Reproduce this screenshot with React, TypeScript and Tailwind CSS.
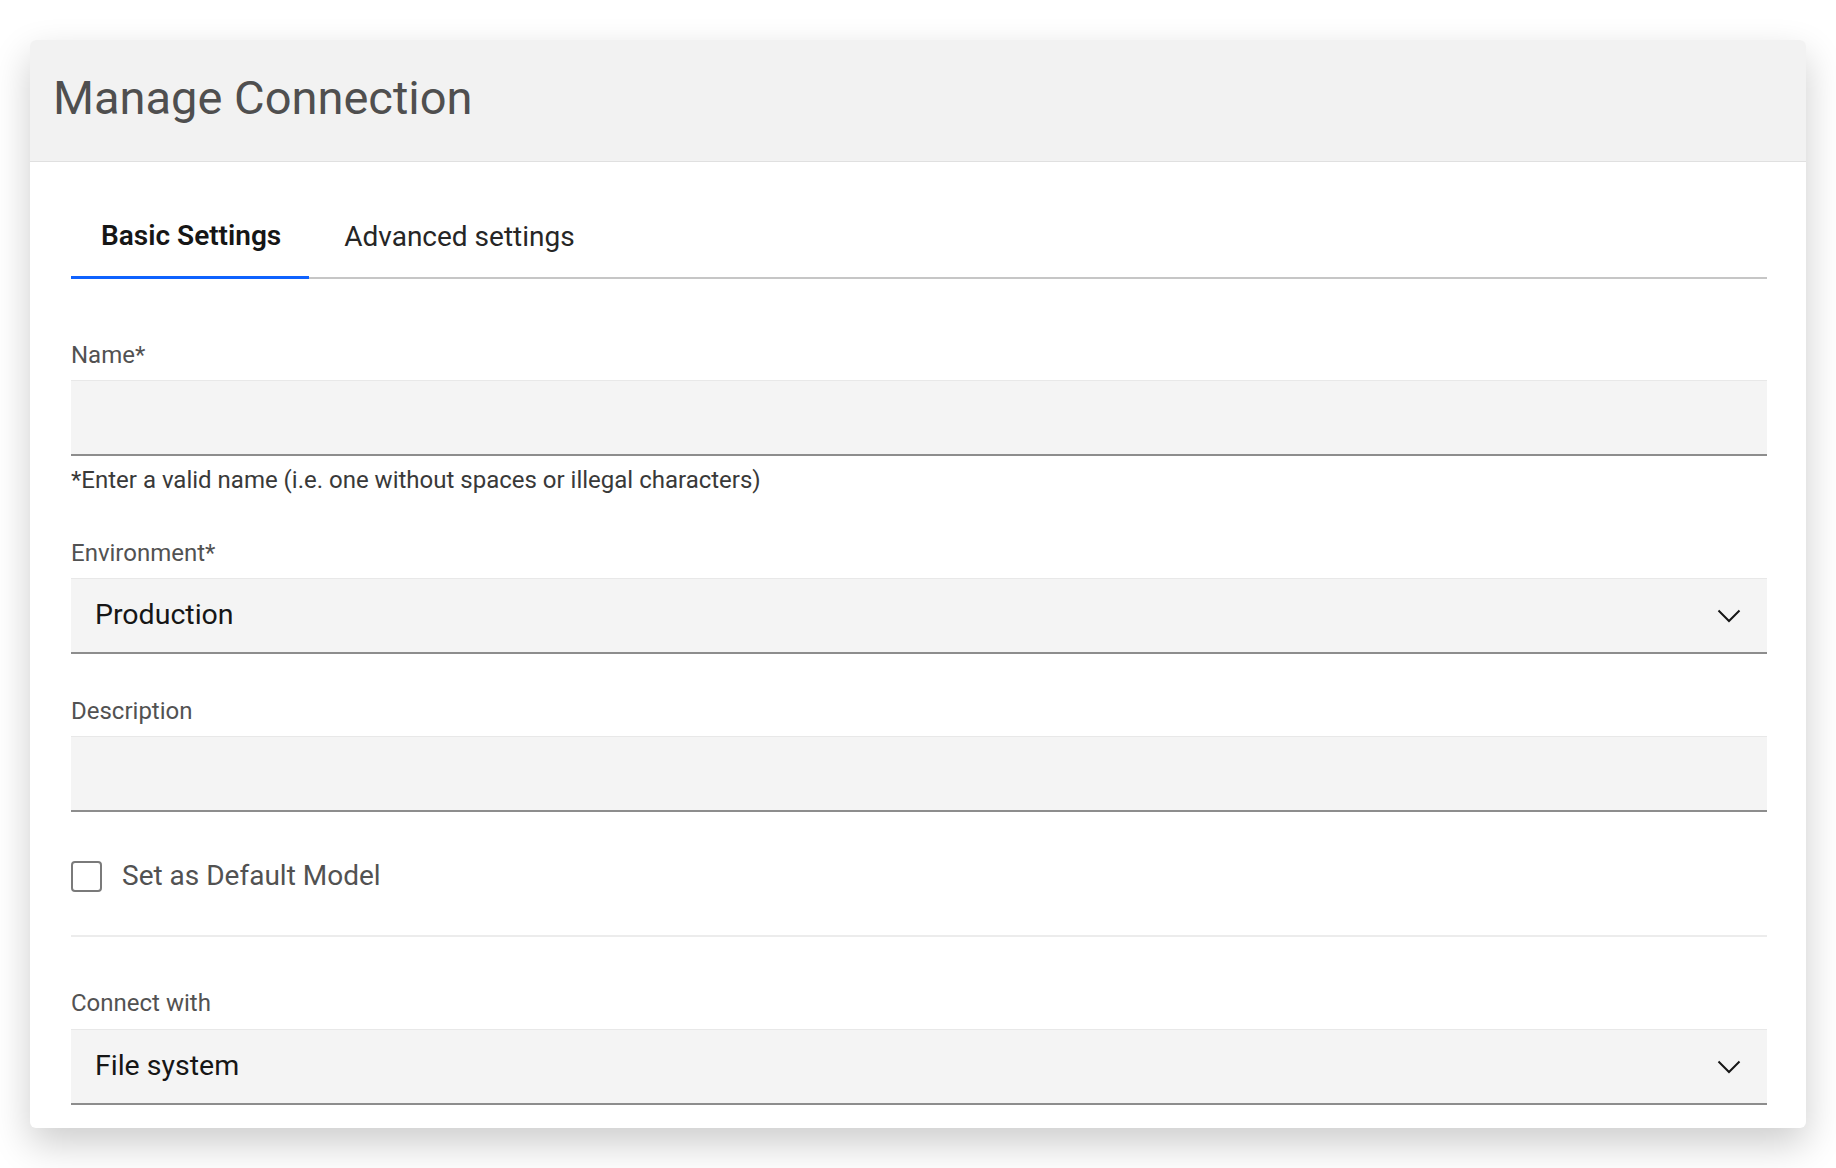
import React, { useState } from "react";

const font = { fontFamily: "Roboto, 'Noto Sans', sans-serif" };

function Chevron() {
  return (
    <svg width="24" height="14" viewBox="0 0 24 14" fill="none">
      <path d="M1.5 1.5 L12 12 L22.5 1.5" stroke="#161616" strokeWidth="2" />
    </svg>
  );
}

function FieldLabel({ children, className = "" }: { children: React.ReactNode; className?: string }) {
  return <div className={`text-[24px] leading-[28px] text-[#525252] ${className}`}>{children}</div>;
}

function TextBox() {
  return <div className="h-[76px] bg-[#f4f4f4] border-t border-t-[#e8e8e8] border-b-2 border-b-[#8d8d8d]" />;
}

function SelectBox({ value }: { value: string }) {
  return (
    <div className="h-[76px] bg-[#f4f4f4] border-t border-t-[#e8e8e8] border-b-2 border-b-[#8d8d8d] flex items-center justify-between pl-[24px] pr-[26px]">
      <span className="text-[28.5px] text-[#161616]">{value}</span>
      <Chevron />
    </div>
  );
}

export default function App() {
  const [tab, setTab] = useState<"basic" | "advanced">("basic");
  const [isDefault, setIsDefault] = useState(false);

  return (
    <div className="min-h-screen bg-white pt-[40px] px-[30px]" style={font}>
      <div className="rounded-[6px] bg-white shadow-[0_16px_38px_rgba(0,0,0,0.2)] overflow-hidden">
        {/* Header */}
        <div className="h-[122px] bg-[#f2f2f2] border-b border-[#e0e0e0] flex items-center pl-[23px] pb-[6px]">
          <h1 className="text-[47px] font-normal text-[#4f4f4f] leading-none">Manage Connection</h1>
        </div>

        <div className="pl-[41px] pr-[39px] pt-[39px] pb-[23px]">
          {/* Tabs */}
          <div className="flex border-b-2 border-[#c6c6c6]">
            <button
              type="button"
              onClick={() => setTab("basic")}
              className={`h-[78px] -mb-[2px] pl-[30px] pr-[28px] pb-[6px] text-[28px] ${
                tab === "basic"
                  ? "font-semibold text-[#161616] border-b-[3px] border-[#0f62fe]"
                  : "text-[#262626]"
              }`}
            >
              Basic Settings
            </button>
            <button
              type="button"
              onClick={() => setTab("advanced")}
              className={`h-[78px] -mb-[2px] px-[35px] pb-[6px] text-[28px] ${
                tab === "advanced"
                  ? "font-semibold text-[#161616] border-b-[3px] border-[#0f62fe]"
                  : "text-[#262626]"
              }`}
            >
              Advanced settings
            </button>
          </div>

          {/* Name */}
          <FieldLabel className="mt-[62px] mb-[11px]">Name*</FieldLabel>
          <TextBox />
          <div className="mt-[10px] text-[24px] leading-[28px] text-[#393939]">
            *Enter a valid name (i.e. one without spaces or illegal characters)
          </div>

          {/* Environment */}
          <FieldLabel className="mt-[45px] mb-[11px]">Environment*</FieldLabel>
          <SelectBox value="Production" />

          {/* Description */}
          <FieldLabel className="mt-[43px] mb-[11px]">Description</FieldLabel>
          <TextBox />

          {/* Default checkbox */}
          <label className="mt-[48px] h-[32px] flex items-center gap-[20px] cursor-pointer">
            <button
              type="button"
              onClick={() => setIsDefault(!isDefault)}
              className="w-[31px] h-[31px] rounded-[4px] border-2 border-[#7a7a7a] bg-white"
            />
            <span className="text-[28px] text-[#525252]">Set as Default Model</span>
          </label>

          <div className="mt-[43px] h-[2px] bg-[#ececec]" />

          {/* Connect with */}
          <FieldLabel className="mt-[52px] mb-[12px]">Connect with</FieldLabel>
          <SelectBox value="File system" />
        </div>
      </div>
    </div>
  );
}
